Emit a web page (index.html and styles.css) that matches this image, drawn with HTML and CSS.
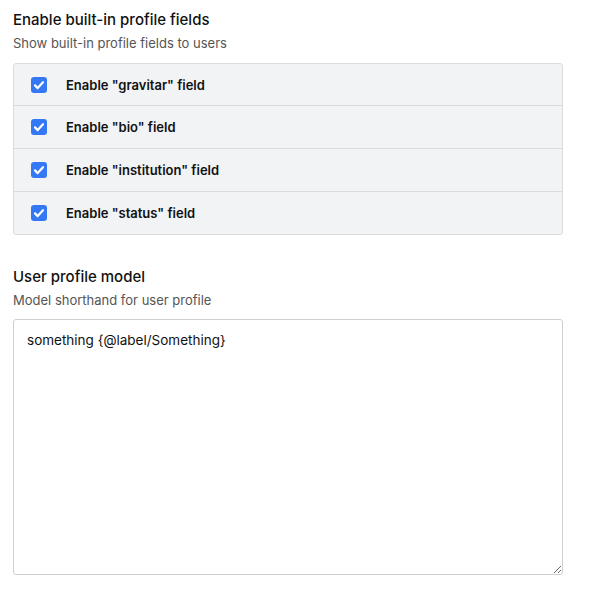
FILE: index.html
```html
<!DOCTYPE html>
<html>
<head>
<meta charset="utf-8">
<link rel="stylesheet" href="styles.css">
</head>
<body>
<div class="page">
  <section class="field">
    <h2 class="title">Enable built-in profile fields</h2>
    <p class="desc">Show built-in profile fields to users</p>
    <div class="list">
      <label class="row"><span class="check"><svg viewBox="0 0 16 16" width="16" height="16"><path d="M4 8.4l2.7 2.7L12 5.2" fill="none" stroke="#fff" stroke-width="2.2" stroke-linecap="round" stroke-linejoin="round"/></svg></span><span class="label">Enable "gravitar" field</span></label>
      <label class="row"><span class="check"><svg viewBox="0 0 16 16" width="16" height="16"><path d="M4 8.4l2.7 2.7L12 5.2" fill="none" stroke="#fff" stroke-width="2.2" stroke-linecap="round" stroke-linejoin="round"/></svg></span><span class="label">Enable "bio" field</span></label>
      <label class="row"><span class="check"><svg viewBox="0 0 16 16" width="16" height="16"><path d="M4 8.4l2.7 2.7L12 5.2" fill="none" stroke="#fff" stroke-width="2.2" stroke-linecap="round" stroke-linejoin="round"/></svg></span><span class="label">Enable "institution" field</span></label>
      <label class="row"><span class="check"><svg viewBox="0 0 16 16" width="16" height="16"><path d="M4 8.4l2.7 2.7L12 5.2" fill="none" stroke="#fff" stroke-width="2.2" stroke-linecap="round" stroke-linejoin="round"/></svg></span><span class="label">Enable "status" field</span></label>
    </div>
  </section>
  <section class="field">
    <h2 class="title">User profile model</h2>
    <p class="desc desc-tight">Model shorthand for user profile</p>
    <textarea class="model">something {@label/Something}</textarea>
  </section>
</div>
</body>
</html>
```
FILE: styles.css
```css
html, body {
  margin: 0;
  padding: 0;
  background: #fff;
}
body {
  font-family: Inter, "Liberation Sans", sans-serif;
  color: #111;
}
.page {
  width: 550px;
  padding: 10px 13px 0;
  display: flex;
  flex-direction: column;
  gap: 32px;
}
.field {
  display: flex;
  flex-direction: column;
}
.title {
  margin: 0;
  font-size: 15px;
  font-weight: 500;
  line-height: 20px;
  color: #111;
}
.desc {
  margin: 3px 0 10px;
  font-size: 13px;
  line-height: 20px;
  color: #555;
}
.desc-tight {
  margin-bottom: 9px;
}
.list {
  border: 1px solid #d9dcdf;
  border-radius: 3px;
  background: #f2f3f5;
}
.row {
  box-sizing: border-box;
  display: flex;
  align-items: center;
  height: 43px;
  padding-left: 17px;
  gap: 19px;
  border-top: 1px solid #d9dcdf;
}
.row:first-child {
  border-top: none;
  height: 41px;
}
.check {
  width: 16px;
  height: 16px;
  border-radius: 3px;
  background: #3478f6;
  display: flex;
}
.label {
  font-size: 13px;
  font-weight: 600;
  color: #111;
}
.model {
  box-sizing: border-box;
  width: 550px;
  height: 256px;
  margin: 0;
  padding: 10px 13px;
  border: 1px solid #cfcfcf;
  border-radius: 3px;
  font-family: Inter, "Liberation Sans", sans-serif;
  font-size: 13.5px;
  line-height: 20px;
  color: #111;
  resize: both;
  outline: none;
}
```
